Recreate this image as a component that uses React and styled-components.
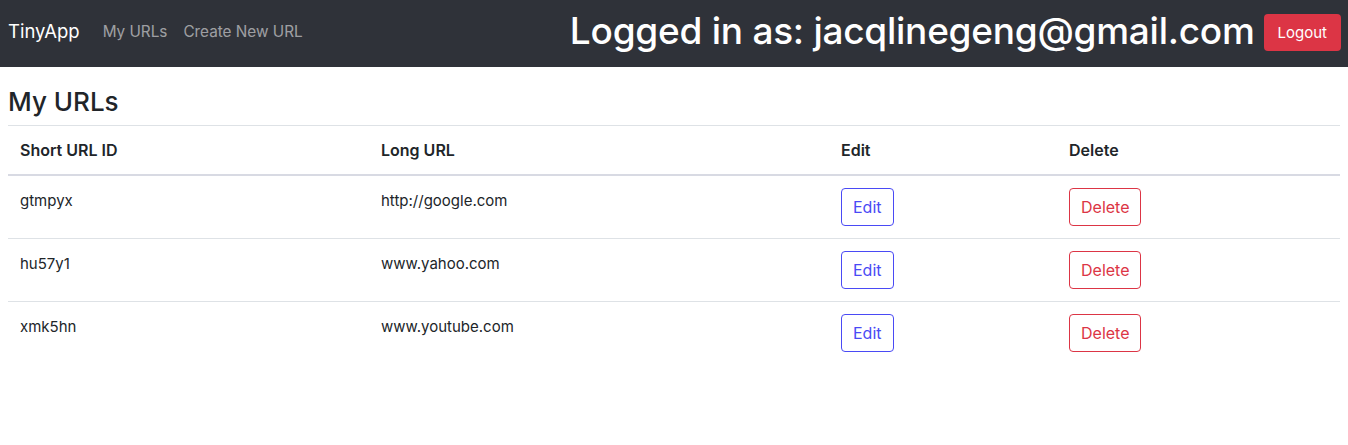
import styled, { createGlobalStyle } from "styled-components";

const GlobalStyle = createGlobalStyle`
  body {
    margin: 0;
    font-family: Inter, "Liberation Sans", sans-serif;
    color: #212529;
    background: #fff;
  }
`;

const NavBar = styled.nav`
  height: 67px;
  box-sizing: border-box;
  background-color: #2f3239;
  display: flex;
  align-items: center;
  padding: 0 7px 5px 8px;
`;

const Brand = styled.span`
  color: #fff;
  font-size: 18.5px;
  margin-right: 23px;
`;

const NavLink = styled.span`
  color: rgba(255, 255, 255, 0.55);
  font-size: 15.3px;
  margin-right: 16px;
`;

const LoggedIn = styled.h2`
  margin: 0 9px 0 auto;
  color: #fff;
  font-size: 37px;
  font-weight: 500;
  letter-spacing: -0.25px;
  line-height: 40px;
`;

const LogoutButton = styled.button`
  background-color: #dc3545;
  color: #fff;
  border: none;
  border-radius: 4px;
  font-family: inherit;
  font-size: 15px;
  height: 37px;
  padding: 0 14px;
  margin-top: 3px;
`;

const Main = styled.main`
  padding: 0 8px;
`;

const Title = styled.h3`
  margin: 20px 0 8px;
  font-size: 26px;
  font-weight: 500;
  line-height: 30px;
`;

const Table = styled.table`
  width: 100%;
  border-collapse: collapse;
  border-top: 1px solid #dee2e6;
  font-size: 15px;
`;

const HeadCell = styled.th`
  text-align: left;
  font-size: 16px;
  font-weight: 600;
  padding: 12px;
  height: 24px;
  border-bottom: 2px solid #d8dae3;
  width: ${({ $w }) => $w};
`;

const Cell = styled.td`
  padding: 13px 12px 11px;
  vertical-align: top;
  line-height: 24px;
  border-bottom: 1px solid #dee2e6;
`;

const ButtonCell = styled(Cell)`
  padding: 12px;
`;

const Row = styled.tr`
  &:last-child td {
    border-bottom: none;
  }
`;

const OutlineButton = styled.button`
  background: #fff;
  border: 1px solid ${({ $color }) => $color};
  color: ${({ $color }) => $color};
  border-radius: 4px;
  font-family: inherit;
  font-size: 16px;
  height: 38px;
  padding: 0 11px;
`;

const urls = [
  { id: "gtmpyx", long: "http://google.com" },
  { id: "hu57y1", long: "www.yahoo.com" },
  { id: "xmk5hn", long: "www.youtube.com" },
];

export default function App() {
  return (
    <>
      <GlobalStyle />
      <NavBar>
        <Brand>TinyApp</Brand>
        <NavLink>My URLs</NavLink>
        <NavLink>Create New URL</NavLink>
        <LoggedIn>Logged in as: jacqlinegeng@gmail.com</LoggedIn>
        <LogoutButton>Logout</LogoutButton>
      </NavBar>
      <Main>
        <Title>My URLs</Title>
        <Table>
          <thead>
            <tr>
              <HeadCell $w="337px">Short URL ID</HeadCell>
              <HeadCell $w="436px">Long URL</HeadCell>
              <HeadCell $w="204px">Edit</HeadCell>
              <HeadCell>Delete</HeadCell>
            </tr>
          </thead>
          <tbody>
            {urls.map((u) => (
              <Row key={u.id}>
                <Cell>{u.id}</Cell>
                <Cell>{u.long}</Cell>
                <ButtonCell>
                  <OutlineButton $color="#4a4af5">Edit</OutlineButton>
                </ButtonCell>
                <ButtonCell>
                  <OutlineButton $color="#dc3545">Delete</OutlineButton>
                </ButtonCell>
              </Row>
            ))}
          </tbody>
        </Table>
      </Main>
    </>
  );
}
